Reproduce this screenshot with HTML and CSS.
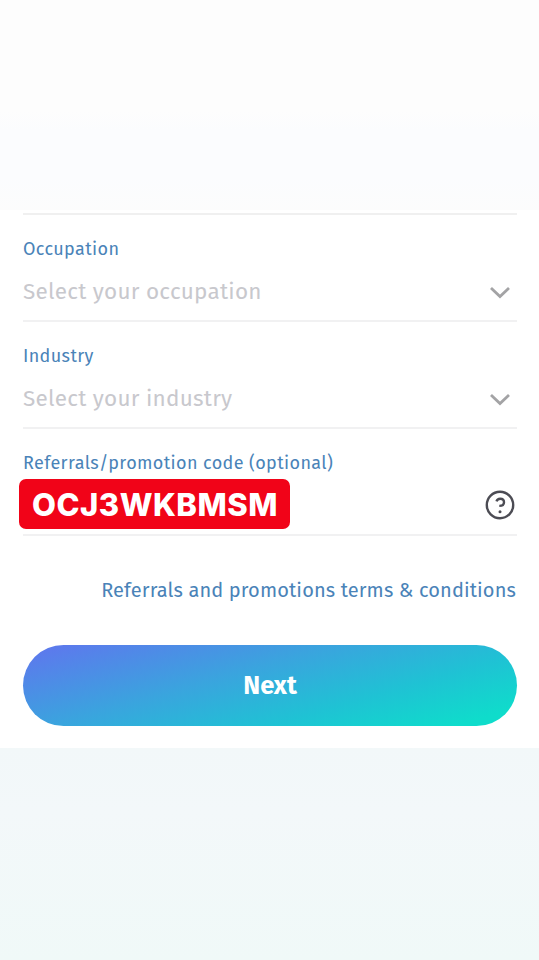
FILE: index.html
```html
<!DOCTYPE html>
<html lang="en">
<head>
    <meta charset="UTF-8">
    <meta name="viewport" content="width=device-width, initial-scale=1.0">
    <title>Referral code</title>
    <link rel="stylesheet" href="styles.css">
</head>
<body>
    <div class="top"></div>
    <main class="panel">
        <form class="form">
            <div class="field">
                <span class="label">Occupation</span>
                <div class="control">
                    <span class="placeholder">Select your occupation</span>
                    <svg class="chevron" width="24" height="16" viewBox="0 0 24 16"><path d="M3 4L12 12.5L21 4"/></svg>
                </div>
            </div>
            <div class="field">
                <span class="label">Industry</span>
                <div class="control">
                    <span class="placeholder">Select your industry</span>
                    <svg class="chevron" width="24" height="16" viewBox="0 0 24 16"><path d="M3 4L12 12.5L21 4"/></svg>
                </div>
            </div>
            <div class="field">
                <span class="label">Referrals/promotion code (optional)</span>
                <div class="control">
                    <span class="code">OCJ3WKBMSM</span>
                    <svg class="help" width="30" height="30" viewBox="0 0 30 30">
                        <circle cx="15" cy="15" r="13.2"/>
                        <path d="M11.5 11.4C12 9.6 13.4 8.7 15.2 8.7C17.5 8.7 19 10.1 19 12.2C19 14.6 17.2 15.9 14.3 15.9"/>
                        <circle class="dot" cx="15" cy="21.8" r="1.5"/>
                    </svg>
                </div>
            </div>
        </form>
        <a class="terms">Referrals and promotions terms &amp; conditions</a>
        <button class="next" type="button">Next</button>
    </main>
    <div class="bottom"></div>
</body>
</html>
```

FILE: styles.css
```css
* {
    box-sizing: border-box;
}
body {
    margin: 0;
    width: 539px;
    height: 960px;
    overflow: hidden;
    font-family: "Fira Sans", "Noto Sans", sans-serif;
    background-color: #fff;
}
.top {
    height: 210px;
    background: linear-gradient(#fdfdfd 0%, #fdfdfd 53%, #fbfcfe 62%, #fbfcfe 85%, #fcfcfc 100%);
}
.panel {
    display: flex;
    flex-direction: column;
    height: 538px;
    padding: 3px 22px 0 23px;
    background-color: #fff;
}
.form {
    border-top: 2px solid #f0f0f0;
}
.field {
    height: 107px;
    padding-top: 21px;
    border-bottom: 2px solid #f1f1f2;
}
.label {
    display: block;
    height: 27px;
    line-height: 27px;
    font-size: 18px;
    letter-spacing: 0.38px;
    color: #4a83b8;
    white-space: nowrap;
}
.control {
    display: flex;
    align-items: center;
    justify-content: space-between;
    height: 57px;
    padding-right: 2px;
}
.placeholder {
    font-size: 22.5px;
    letter-spacing: 0.25px;
    line-height: 30px;
    color: #c8c8cd;
    white-space: nowrap;
}
.chevron {
    margin-right: 3px;
    fill: none;
    stroke: #a3a3a5;
    stroke-width: 2.8;
}
.code {
    width: 271px;
    height: 50px;
    margin: -3px 0 0 -4px;
    padding-left: 13px;
    border-radius: 7px;
    background-color: #f10318;
    color: #fff;
    font-family: Inter, sans-serif;
    font-size: 31px;
    font-weight: 800;
    letter-spacing: 0.5px;
    line-height: 51px;
    white-space: nowrap;
}
.help {
    margin-top: -2px;
    fill: none;
    stroke: #4c4c54;
    stroke-width: 2.4;
}
.terms {
    align-self: flex-end;
    margin: 40px 1px 0 0;
    line-height: 28px;
    font-size: 20px;
    letter-spacing: 0.13px;
    color: #4a83b8;
    white-space: nowrap;
}
.help .dot {
    fill: #4c4c54;
    stroke: none;
}
.next {
    flex: none;
    height: 81px;
    margin-top: 41px;
    padding: 0;
    border: none;
    border-radius: 41px;
    background: linear-gradient(164deg, #5b7bec 6%, #3aa4de 40%, #1fc2d4 68%, #0fdccb 92%);
    color: #fff;
    font-family: inherit;
    font-size: 25.5px;
    font-weight: 700;
}
.bottom {
    height: 212px;
    background: linear-gradient(#f2f8f9 0%, #f3f8fa 30%, #f0f9f8 100%);
}
```
